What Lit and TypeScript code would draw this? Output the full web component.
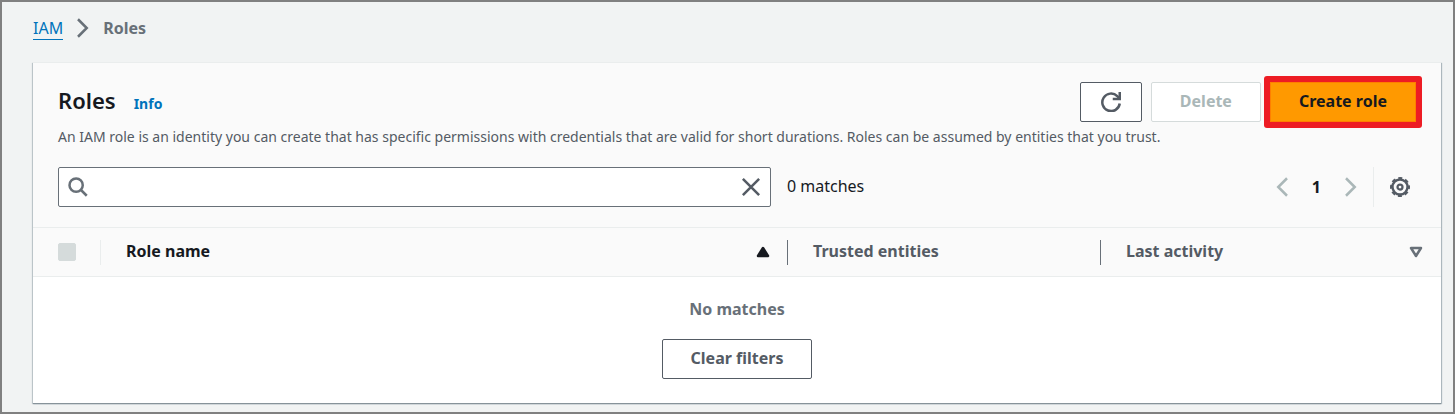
import { LitElement, html, css, svg } from "lit";
import { customElement, state } from "lit/decorators.js";

const icons = {
  chevron: svg`<path d="M4 1l7 7-7 7" />`,
  back: svg`<path d="M12 1L5 8l7 7" />`,
  refresh: svg`<path d="M15 9.200A7 7 0 1 1 13 3.300L14.800 5" /><path d="M15 0v5.600H9.400" />`,
  search: svg`<circle cx="6.500" cy="6.500" r="5.300" /><path d="M10.400 10.400L15 15" />`,
  close: svg`<path d="M1.500 1.500l13 13M14.500 1.500l-13 13" />`,
  gear: svg`<circle cx="8" cy="8" r="6" stroke-width="1.900" />
    <circle cx="8" cy="8" r="7.200" stroke-width="1.600" stroke-dasharray="3.200 2.455" stroke-dashoffset="1.600" />
    <circle cx="8" cy="8" r="2" stroke-width="1.800" />`,
};

@customElement("app-root")
export class AppRoot extends LitElement {
  @state() private query = "";

  static styles = css`
    :host {
      display: block;
      font-family: "Noto Sans", "Open Sans", sans-serif;
      font-size: 16px;
      line-height: 24px;
      color: #16191f;
    }
    * {
      box-sizing: border-box;
    }
    .page {
      border: 2px solid #808080;
      background: #f1f3f3;
      padding: 14px 12px 9px 31px;
    }
    .icon {
      display: block;
      width: 20px;
      height: 20px;
      fill: none;
      stroke: currentColor;
      stroke-width: 2;
    }
    .crumbs {
      display: flex;
      align-items: center;
      gap: 10px;
      margin-bottom: 22px;
      color: #687078;
      font-weight: 700;
    }
    .crumbs a {
      color: #0073bb;
      font-weight: 400;
      line-height: 22px;
      text-decoration: none;
      border-bottom: 1px solid currentColor;
    }
    .card {
      background: #fff;
      border-top: 1px solid #eaeded;
      box-shadow: 0 1px 1px #87939a, 1px 1px 1px #b4bfc4, -1px 1px 1px #c6ced2;
    }
    .head {
      background: #fafafa;
      padding: 19px 25px 20px;
    }
    .title-row {
      display: flex;
      justify-content: space-between;
      align-items: flex-start;
    }
    .title {
      display: flex;
      align-items: baseline;
      gap: 18px;
    }
    h1 {
      margin: 0;
      font-size: 22px;
      line-height: 36px;
      font-weight: 600;
    }
    .info {
      color: #0073bb;
      font-size: 14px;
      font-weight: 700;
      text-decoration: none;
    }
    .actions {
      display: flex;
      align-items: center;
      gap: 9px;
    }
    button {
      font: inherit;
      color: #545b64;
      cursor: pointer;
    }
    .btn {
      display: flex;
      align-items: center;
      justify-content: center;
      height: 40px;
      padding: 0 28px 2px;
      background: #fff;
      border: 1px solid #545b64;
      border-radius: 2px;
      font-weight: 700;
      white-space: nowrap;
    }
    .btn.square {
      width: 62px;
      padding: 0;
    }
    .btn:disabled {
      color: #aab7b8;
      border-color: #d5dbdb;
    }
    .btn.primary {
      background: #ff9900;
      border-color: #ff7f00;
      border-radius: 0;
      color: #16191f;
    }
    .highlight {
      margin: -6px;
      padding: 6px;
      border-radius: 3px;
      background: #ed1c24;
    }
    .desc {
      margin: 3px 0 18px;
      font-size: 14px;
      color: #545b64;
    }
    .tools {
      display: flex;
      align-items: center;
    }
    .search {
      display: flex;
      align-items: center;
      gap: 10px;
      width: 52.5%;
      height: 40px;
      padding: 0 9px;
      background: #fff;
      border: 1px solid #687078;
      border-radius: 2px;
      color: #687078;
    }
    .search input {
      flex: 1;
      min-width: 0;
      border: 0;
      outline: 0;
      background: transparent;
      font: inherit;
      color: #16191f;
    }
    .plain {
      padding: 0;
      border: 0;
      background: none;
    }
    .count {
      margin-left: 16px;
      padding-bottom: 2px;
    }
    .pager {
      display: flex;
      align-items: center;
      gap: 20px;
      margin-left: auto;
    }
    .pager button:disabled {
      color: #aab7b8;
    }
    .pager .page-no {
      color: #16191f;
      font-weight: 700;
    }
    .prefs {
      display: flex;
      align-items: center;
      height: 40px;
      margin-left: 12px;
      padding: 0 6px 0 16px;
      border-left: 1px solid #eaeded;
    }
    table {
      width: 100%;
      table-layout: fixed;
      border-collapse: collapse;
    }
    thead {
      background: #fafafa;
    }
    tr.cols {
      border-top: 1px solid #eaeded;
      border-bottom: 1px solid #eaeded;
    }
    th,
    td {
      padding: 0;
    }
    th {
      height: 49px;
      text-align: left;
      font-weight: 700;
      color: #545b64;
    }
    .col-check {
      width: 68px;
    }
    .col-trust {
      width: 313px;
    }
    .col-last {
      width: 340px;
    }
    .cell {
      display: flex;
      align-items: center;
      justify-content: space-between;
      height: 25px;
      padding: 0 18px 0 25px;
      border-right: 1px solid #687078;
    }
    .cell.light {
      border-color: #eaeded;
    }
    .cell.end {
      border: 0;
    }
    .label {
      padding-bottom: 2px;
    }
    .cell.sorted {
      color: #16191f;
      padding-right: 17px;
    }
    .cell input {
      appearance: none;
      width: 18px;
      height: 18px;
      margin: 0;
      border: 1px solid #d5dbdb;
      border-radius: 2px;
      background: #d5dbdb;
    }
    .sort {
      display: block;
      width: 14px;
      height: 12px;
      fill: none;
      stroke: #687078;
      stroke-width: 2.5;
      stroke-linejoin: round;
    }
    .sorted .sort {
      fill: currentColor;
      stroke: currentColor;
    }
    .empty {
      display: flex;
      flex-direction: column;
      align-items: center;
      gap: 18px;
      padding: 20px 0 24px;
      color: #687078;
      font-weight: 700;
    }
  `;

  private icon(shape: unknown) {
    return html`<svg class="icon" viewBox="0 0 16 16" aria-hidden="true">${shape}</svg>`;
  }

  private clear() {
    this.query = "";
  }

  render() {
    return html`
      <div class="page">
        <nav class="crumbs" aria-label="Breadcrumbs">
          <a href="#iam">IAM</a>${this.icon(icons.chevron)}<span>Roles</span>
        </nav>
        <main class="card">
          <header class="head">
            <div class="title-row">
              <div class="title">
                <h1>Roles</h1>
                <a class="info" href="#info">Info</a>
              </div>
              <div class="actions">
                <button class="btn square" aria-label="Refresh">${this.icon(icons.refresh)}</button>
                <button class="btn" disabled>Delete</button>
                <div class="highlight"><button class="btn primary">Create role</button></div>
              </div>
            </div>
            <p class="desc">An IAM role is an identity you can create that has specific permissions with credentials that are valid for short durations. Roles can be assumed by entities that you trust.</p>
            <div class="tools">
              <div class="search">
                ${this.icon(icons.search)}
                <input type="text" aria-label="Search roles" .value=${this.query}
                  @input=${(e: Event) => (this.query = (e.target as HTMLInputElement).value)} />
                <button class="plain" aria-label="Clear search" @click=${this.clear}>${this.icon(icons.close)}</button>
              </div>
              <span class="count">0 matches</span>
              <div class="pager">
                <button class="plain" aria-label="Previous page" disabled>${this.icon(icons.back)}</button>
                <button class="plain page-no" aria-current="page">1</button>
                <button class="plain" aria-label="Next page" disabled>${this.icon(icons.chevron)}</button>
              </div>
              <div class="prefs">
                <button class="plain" aria-label="Preferences">${this.icon(icons.gear)}</button>
              </div>
            </div>
          </header>
          <table>
            <colgroup><col class="col-check" /><col /><col class="col-trust" /><col class="col-last" /></colgroup>
            <thead>
              <tr class="cols">
                <th><div class="cell light"><input type="checkbox" aria-label="Select all roles" disabled /></div></th>
                <th aria-sort="ascending"><div class="cell sorted"><span class="label">Role name</span>
                  <svg class="sort" viewBox="0 0 14 12" aria-hidden="true"><path d="M7 2l5 8H2z" /></svg></div></th>
                <th><div class="cell"><span class="label">Trusted entities</span></div></th>
                <th><div class="cell end"><span class="label">Last activity</span>
                  <svg class="sort" viewBox="0 0 14 12" aria-hidden="true"><path d="M2 2h10l-5 8z" /></svg></div></th>
              </tr>
            </thead>
            <tbody>
              <tr>
                <td colspan="4">
                  <div class="empty">
                    <span>No matches</span>
                    <button class="btn" @click=${this.clear}>Clear filters</button>
                  </div>
                </td>
              </tr>
            </tbody>
          </table>
        </main>
      </div>
    `;
  }
}
